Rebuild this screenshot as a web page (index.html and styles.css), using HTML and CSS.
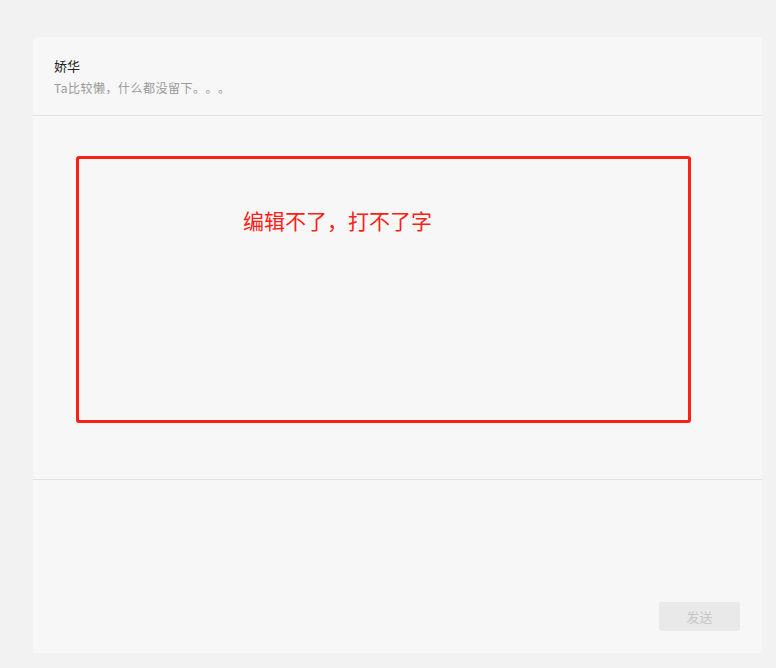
FILE: index.html
```html
<!DOCTYPE html>
<html lang="zh">
<head>
<meta charset="utf-8">
<link rel="stylesheet" href="styles.css">
</head>
<body>
<div class="panel">
  <div class="header">
    <div class="name">娇华</div>
    <div class="sign">Ta比较懒，什么都没留下。。。</div>
  </div>
  <div class="messages">
    <div class="note">
      <div class="note-text">编辑不了，打不了字</div>
    </div>
  </div>
  <div class="editor">
    <button class="send">发送</button>
  </div>
</div>
</body>
</html>
```

FILE: styles.css
```css
html, body {
  margin: 0;
  padding: 0;
}
body {
  background: #f2f2f2;
  font-family: "Microsoft YaHei", "Noto Sans CJK SC", "Liberation Sans", sans-serif;
  width: 776px;
  height: 668px;
  overflow: hidden;
  text-spacing-trim: space-all;
}
.panel {
  margin: 37px 0 0 33px;
  width: 729px;
  height: 616px;
  background: #f7f7f7;
  border-radius: 3px 3px 0 0;
  display: flex;
  flex-direction: column;
}
.header {
  height: 79px;
  flex: none;
  box-sizing: border-box;
  padding: 20px 0 0 21px;
  border-bottom: 1px solid #e1e1e1;
}
.name {
  font-size: 13px;
  line-height: 18px;
  color: #222;
}
.sign {
  font-size: 12px;
  line-height: 18px;
  margin-top: 4px;
  letter-spacing: 0.5px;
  color: #999;
}
.messages {
  height: 364px;
  flex: none;
  box-sizing: border-box;
  border-bottom: 1px solid #e1e1e1;
  padding: 40px 0 0 43px;
}
.note {
  width: 615px;
  height: 267px;
  box-sizing: border-box;
  border: 3px solid #ff2014;
  border-radius: 3px;
  padding: 47px 0 0 164px;
}
.note-text {
  color: #ff2014;
  font-size: 21px;
  line-height: 28px;
}
.editor {
  flex: 1;
  display: flex;
  justify-content: flex-end;
  align-items: flex-end;
  padding: 0 22px 22px 0;
}
.send {
  width: 81px;
  height: 29px;
  border: none;
  border-radius: 3px;
  background: #e9e9e9;
  color: #c6c6c6;
  font-family: inherit;
  font-size: 13px;
  padding: 0;
}
```
